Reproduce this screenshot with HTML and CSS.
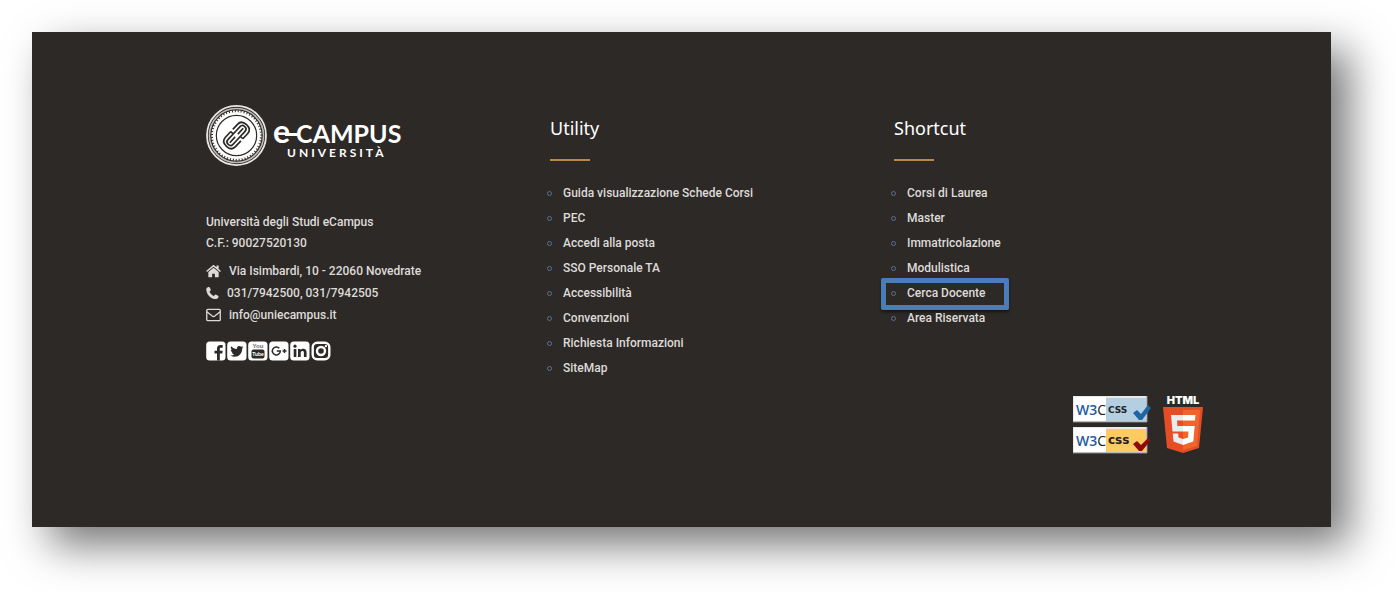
FILE: index.html
```html
<!DOCTYPE html>
<html lang="it">

<head>
    <meta charset="UTF-8">
    <meta name="viewport" content="width=device-width, initial-scale=1.0">
    <link rel="stylesheet" href="styles.css">
    <title>eCampus Università</title>
</head>

<body>

    <footer class="footer">
        <div class="columns">

            <div class="column">
                <a href="#" class="logo">
                    <svg class="seal" viewBox="0 0 62 62" aria-hidden="true">
                        <circle cx="31" cy="31" r="30" fill="none" stroke="#e8e7e5" stroke-width="1.8" />
                        <circle cx="31" cy="31" r="27.500" fill="none" stroke="#bdbbb9" stroke-width="1.6" />
                        <circle cx="31" cy="31" r="24" fill="#fff" />
                        <circle cx="31" cy="31" r="24.500" fill="none" stroke="#fff" stroke-width="2" stroke-dasharray="2 1" />
                        <circle cx="31" cy="31" r="20.500" fill="none" stroke="#2d2926" stroke-width="1.2" />
                        <g transform="rotate(-47 31 31)" fill="none" stroke="#2d2926" stroke-width="1.7">
                            <path d="M30 24h-8c-4 0-6 3-6 7s2 7 6 7h8M33 24h7c4 0 6 3 6 7s-2 7-6 7h-7" />
                            <path d="M35 27.500H22c-4.500 0-4.500 7 0 7h5M27 34.500h13c4.500 0 4.500-7 0-7h-5" />
                            <path d="M21 31h8M33 31h8M30 24v3M33 35v3" />
                        </g>
                    </svg>
                    <span class="brand">
                        <span class="brand-name"><span class="brand-e">e</span>CAMPUS</span>
                        <span class="brand-sub">UNIVERSITÀ</span>
                    </span>
                </a>

                <p class="info">Università degli Studi eCampus<br>C.F.: 90027520130</p>

                <ul class="contacts">
                    <li>
                        <svg width="15" height="14" viewBox="0 0 16 14" fill="#dddbd9" aria-hidden="true">
                            <path d="M8 3.500L2.500 8v5q0 .6.600.600H6.500V9.800h3v3.800h3.400q.6 0 .6-.6V8z" />
                            <path d="M8 .3L.1 7l1 1.100L8 2.400 14.900 8.100l1-1.100L13.500 4.900V1h-2.300v2z" />
                        </svg>
                        Via Isimbardi, 10 - 22060 Novedrate
                    </li>
                    <li>
                        <svg width="13" height="14" viewBox="0 0 14 14" fill="#dddbd9" aria-hidden="true">
                            <path d="M.6 2C1 .8 2.800.2 3.500.5c.6.300 1.700 2.700 1.700 3.300 0 .8-1.400 1.300-1.400 1.900 0 .9 3.300 4.300 4.400 4.400.7 0 1.300-1.500 2-1.500.6 0 3.100 1.400 3.300 1.900.3.700-.4 2.200-1.600 2.700C8.500 14.700 3.400 11.200 1.500 7.700.5 5.600-.1 3.600.6 2z" />
                        </svg>
                        031/7942500, 031/7942505
                    </li>
                    <li>
                        <svg width="15" height="14" viewBox="0 0 16 14" fill="none" stroke="#dddbd9" stroke-width="1.4" aria-hidden="true">
                            <rect x=".8" y="1" width="14.400" height="12" rx="1" />
                            <path d="M1 3.500c2 2 4 3.200 5.500 4.500q1.500 1.200 3 0C11 6.700 13 5.500 15 3.500" />
                        </svg>
                        <a href="#">info@uniecampus.it</a>
                    </li>
                </ul>

                <div class="social">
                    <a href="#" aria-label="Facebook">
                        <svg viewBox="0 0 20 20">
                            <rect x=".2" y=".5" width="19.300" height="19" rx="3.500" fill="#fff" />
                            <path d="M11 19.500v-7H8.500V9.800H11V7.500C11 5 12.500 4 14.500 4h2.200v2.700h-1.500c-1.100 0-1.400.5-1.400 1.400v1.700h2.900l-.4 2.700h-2.500v7z" fill="#2d2926" />
                        </svg>
                    </a>
                    <a href="#" aria-label="Twitter">
                        <svg viewBox="0 0 20 20">
                            <rect x=".2" y=".5" width="19.300" height="19" rx="3.500" fill="#fff" />
                            <path d="M16.500 6.200l-1.400.4 1-1.400-1.700.6C12 3.800 9.400 5.500 9.900 8 7.500 7.900 5.500 6.800 4.200 5.200c-.8 1.400-.3 3 .9 3.900l-1.300-.3c0 1.300.9 2.400 2.200 2.800H4.800c.4 1.100 1.300 1.800 2.500 1.900-1 .8-2.300 1.200-3.800 1.100 5.500 3.200 11.800-.2 11.700-7z" fill="#2d2926" />
                        </svg>
                    </a>
                    <a href="#" aria-label="YouTube">
                        <svg viewBox="0 0 20 20">
                            <rect x=".2" y=".5" width="19.300" height="19" rx="3.500" fill="#fff" />
                            <text x="10" y="7" class="yt-you">You</text>
                            <rect x="3.500" y="8.500" width="13" height="9" rx="2" fill="#2d2926" />
                            <text x="10" y="15" class="yt-tube">Tube</text>
                        </svg>
                    </a>
                    <a href="#" aria-label="Google+">
                        <svg viewBox="0 0 20 20">
                            <rect x=".2" y=".5" width="19.300" height="19" rx="3.500" fill="#fff" />
                            <path d="M10.300 7.300A4 4 0 1 0 11.300 10H7.800M13.500 10h4M15.500 8v4" fill="none" stroke="#2d2926" stroke-width="1.500" />
                        </svg>
                    </a>
                    <a href="#" aria-label="LinkedIn">
                        <svg viewBox="0 0 20 20">
                            <rect x=".2" y=".5" width="19.300" height="19" rx="3.500" fill="#fff" />
                            <circle cx="5" cy="5.200" r="1.600" fill="#2d2926" />
                            <path d="M3.700 8h2.700v8H3.700zM8 8h2.600v1.200C11.100 8.300 12 7.800 13.300 7.800c2.200 0 3.300 1.400 3.300 3.700V16h-2.700v-4.200c0-1.200-.5-1.800-1.500-1.800s-1.700.7-1.700 1.900V16H8z" fill="#2d2926" />
                        </svg>
                    </a>
                    <a href="#" aria-label="Instagram">
                        <svg viewBox="0 0 20 20" fill="none" stroke="#fff">
                            <rect x="1.700" y="1.700" width="16.600" height="16.600" rx="4.500" stroke-width="2.400" />
                            <circle cx="10" cy="10" r="4" stroke-width="2.400" />
                            <circle cx="14.900" cy="5.100" r="1.200" fill="#fff" stroke="none" />
                        </svg>
                    </a>
                </div>
            </div>

            <div class="column">
                <h2>Utility</h2>
                <ul class="links">
                    <li><a href="#">Guida visualizzazione Schede Corsi</a></li>
                    <li><a href="#">PEC</a></li>
                    <li><a href="#">Accedi alla posta</a></li>
                    <li><a href="#">SSO Personale TA</a></li>
                    <li><a href="#">Accessibilità</a></li>
                    <li><a href="#">Convenzioni</a></li>
                    <li><a href="#">Richiesta Informazioni</a></li>
                    <li><a href="#">SiteMap</a></li>
                </ul>
            </div>

            <div class="column">
                <h2>Shortcut</h2>
                <ul class="links">
                    <li><a href="#">Corsi di Laurea</a></li>
                    <li><a href="#">Master</a></li>
                    <li><a href="#">Immatricolazione</a></li>
                    <li><a href="#">Modulistica</a></li>
                    <li class="highlight"><a href="#">Cerca Docente</a></li>
                    <li><a href="#">Area Riservata</a></li>
                </ul>
            </div>

        </div>

        <div class="badges">
            <div class="w3c">
                <a href="#" aria-label="W3C CSS">
                    <svg width="80" height="27" viewBox="0 0 80 27">
                        <rect width="74" height="26" fill="#e9e9e7" />
                        <rect x="1" y="1" width="32" height="24" fill="#fff" />
                        <rect x="33" y="2" width="40" height="23" fill="#b4cfe2" />
                        <path d="M0 26h74V0" fill="none" stroke="#888" />
                        <text x="3" y="19" class="w3">W3<tspan class="w3-c">C</tspan></text>
                        <text x="35" y="17" class="css">CSS</text>
                        <path d="M60 17l4-3 4 4 7-9 3 3-9 12h-3z" fill="#1f65a3" />
                    </svg>
                </a>
                <a href="#" aria-label="W3C CSS">
                    <svg width="80" height="27" viewBox="0 0 80 27">
                        <rect width="74" height="26" fill="#e9e9e7" />
                        <rect x="1" y="1" width="32" height="24" fill="#fff" />
                        <rect x="33" y="2" width="40" height="23" fill="#fdcb60" />
                        <path d="M0 26h74V0" fill="none" stroke="#888" />
                        <text x="3" y="19" class="w3">W3<tspan class="w3-c">C</tspan></text>
                        <text x="35" y="17" class="css css-lower">css</text>
                        <path d="M60 17l4-3 4 4 7-7 3 2-9 11h-3z" fill="#8e0b0b" />
                    </svg>
                </a>
            </div>
            <a href="#" aria-label="HTML5">
                <svg width="42" height="62" viewBox="0 -3 42 62">
                    <text x="21" y="9" class="html">HTML</text>
                    <path d="M1 12h40l-4 41-16 5-16-5z" fill="#e44d26" />
                    <path d="M21 15h17l-3 36-14 4z" fill="#f16529" />
                    <path d="M9 20h12v5.500h-6l.4 5.500H21v5.500H10.500z" fill="#ebebeb" />
                    <path d="M10.700 38.500h5.500l.3 4L21 44v6l-9.500-3.500z" fill="#ebebeb" />
                    <path d="M21 20h12.500l-.5 5.500H21zM21 31h11.700l-1.400 15.500L21 50v-6l5-1.500.5-6H21z" fill="#fff" />
                </svg>
            </a>
        </div>
    </footer>

</body>

</html>
```
FILE: styles.css
```css
body {
    margin: 0;
    padding: 32px 65px 65px 32px;
    background-color: white;
    font-family: Roboto, "Liberation Sans", sans-serif;
    font-size: 12px;
    font-weight: 500;
    color: #dddbd9;
}

a {
    color: inherit;
    text-decoration: none;
}

ul {
    list-style: none;
    margin: 0;
    padding: 0;
}

svg {
    display: block;
}

.footer {
    background-color: #2d2926;
    padding: 73px 93px 73px 174px;
    box-shadow: 18px 18px 40px rgba(0, 0, 0, 0.54);
}

.columns {
    display: grid;
    grid-template-columns: repeat(3, 1fr);
}

.logo {
    display: flex;
    align-items: center;
    gap: 6px;
    color: white;
}

.seal {
    width: 61px;
    height: 61px;
}

.brand {
    display: flex;
    flex-direction: column;
    font-family: Lato, sans-serif;
    font-weight: 700;
    padding-top: 8px;
}

.brand-name {
    font-size: 25px;
    line-height: 24px;
}

.brand-e {
    position: relative;
    font-size: 32px;
    margin-right: 6px;
}

/* crossbar that joins the e to the C */
.brand-e::after {
    content: "";
    position: absolute;
    left: 12px;
    bottom: 14px;
    width: 14px;
    height: 3px;
    background-color: white;
}

.brand-sub {
    font-size: 12px;
    line-height: 16px;
    letter-spacing: 3px;
    padding-left: 14px;
}

.info {
    margin: 46px 0 6px;
    line-height: 21px;
}

.contacts li {
    display: flex;
    align-items: center;
    gap: 8px;
    line-height: 22px;
}

.social {
    display: flex;
    gap: 1px;
    margin-top: 15px;
}

.social svg {
    width: 20px;
    height: 20px;
}

.yt-you,
.yt-tube {
    font-family: "Liberation Sans", sans-serif;
    font-size: 6px;
    font-weight: 700;
    text-anchor: middle;
}

.yt-you {
    fill: #6d6a68;
}

.yt-tube {
    font-size: 5px;
    fill: white;
}

h2 {
    margin: 0 0 20px;
    font-family: "Noto Sans", sans-serif;
    font-size: 18px;
    font-weight: 400;
    line-height: 46px;
    color: white;
}

h2::after {
    content: "";
    display: block;
    width: 40px;
    height: 2px;
    margin-top: 8px;
    background-color: #b98a45;
}

.links li {
    position: relative;
    display: flex;
    align-items: center;
    gap: 11px;
    line-height: 25px;
}

.links li::before {
    content: "";
    box-sizing: border-box;
    width: 5px;
    height: 5px;
    margin-left: -3px;
    border: 1px solid #58708f;
    border-radius: 50%;
}

/* frame drawn over the list, it takes no room in it */
.highlight::after {
    content: "";
    position: absolute;
    box-sizing: border-box;
    top: -3px;
    left: -13px;
    width: 128px;
    height: 32px;
    border: 5px solid #4a7ebb;
    border-radius: 2px;
    box-shadow: 0 2px 3px rgba(0, 0, 0, 0.5);
}

.badges {
    display: flex;
    justify-content: flex-end;
    align-items: flex-end;
    gap: 9px;
    margin-top: 11px;
    padding-right: 34px;
}

.w3c {
    display: flex;
    flex-direction: column;
    gap: 4px;
}

.w3 {
    font-family: "Open Sans", sans-serif;
    font-size: 14px;
    font-weight: 600;
    fill: #1d5ca0;
}

.w3-c {
    font-weight: 400;
    fill: #222;
}

.css {
    font-family: "DejaVu Sans", sans-serif;
    font-size: 9px;
    font-weight: 700;
    fill: #222;
}

.css-lower {
    font-size: 12px;
}

.html {
    font-family: Inter, sans-serif;
    font-size: 11px;
    font-weight: 900;
    text-anchor: middle;
    fill: white;
}
```
